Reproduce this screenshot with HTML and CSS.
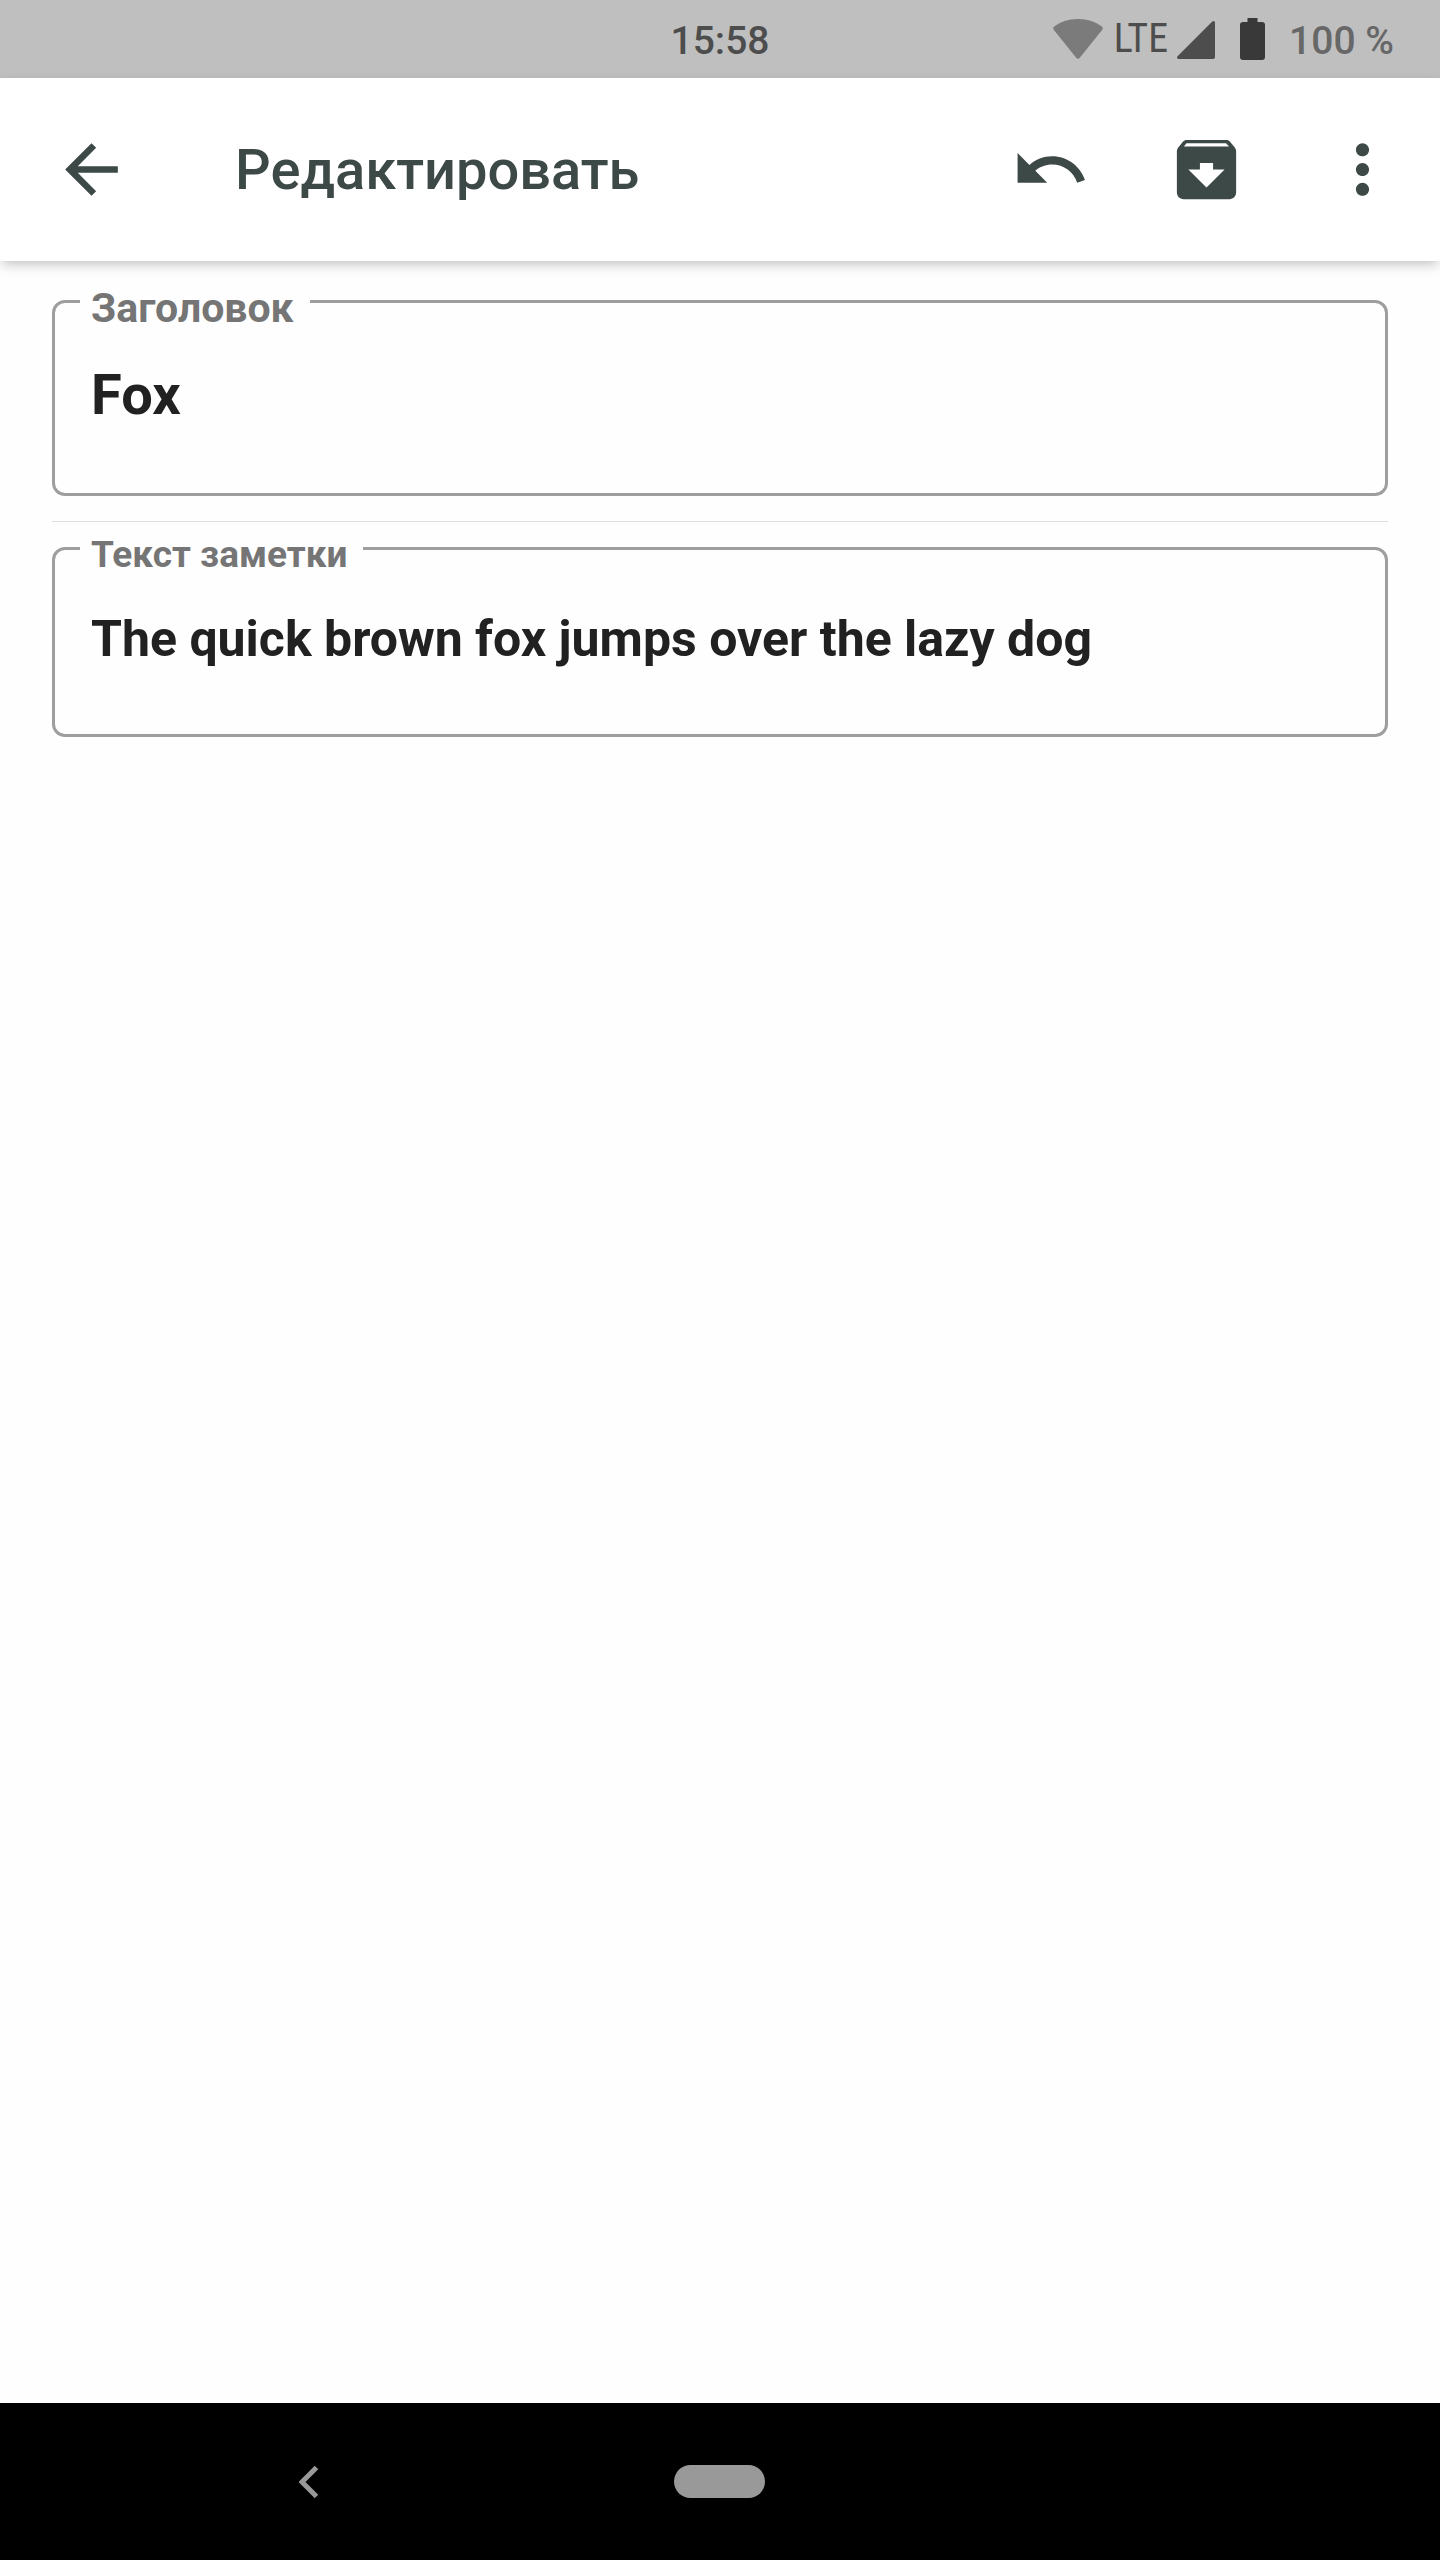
FILE: index.html
```html
<!DOCTYPE html>
<html lang="ru">
<head>
<meta charset="utf-8">
<meta name="viewport" content="width=device-width, initial-scale=1">
<title>Редактировать</title>
<link rel="stylesheet" href="styles.css">
</head>
<body>
<div class="status-bar">
  <span class="status-time">15:58</span>
  <div class="status-icons">
    <svg class="icon-wifi" viewBox="0 0 50 40" aria-hidden="true"><path d="M25 0C15 0 7 3 1.200 7.500Q-.5 9 .9 10.900L23.200 38.800Q25 40.600 26.800 38.800L49.100 10.900Q50.500 9 48.800 7.500C43 3 35 0 25 0z"/></svg>
    <span class="status-network">LTE</span>
    <svg class="icon-signal" viewBox="0 0 38 38" aria-hidden="true"><path d="M35 .8Q38-1.200 38 2V36Q38 38 36 38H2Q-1 38 .6 35.200z"/></svg>
    <svg class="icon-battery" viewBox="0 0 25 42" aria-hidden="true"><path d="M7.500 0H17.500V4H22Q25 4 25 7V39Q25 42 22 42H3Q0 42 0 39V7Q0 4 3 4H7.500z"/></svg>
    <span class="status-percent">100 %</span>
  </div>
</div>
<header class="toolbar">
  <button class="tool-button tool-back" type="button" aria-label="Назад">
    <svg class="tool-icon" viewBox="0 0 24 24" aria-hidden="true"><path d="M20 11H7.830l5.590-5.590L12 4l-8 8 8 8 1.410-1.410L7.830 13H20v-2z"/></svg>
  </button>
  <h1 class="toolbar-title">Редактировать</h1>
  <button class="tool-button" type="button" aria-label="Отменить">
    <svg class="tool-icon" viewBox="0 0 24 24" aria-hidden="true"><path d="M12.500 8c-2.650 0-5.050.99-6.900 2.600L2 7v9h9l-3.620-3.620c1.390-1.160 3.160-1.880 5.120-1.880 3.540 0 6.550 2.310 7.600 5.500l2.370-.78C21.080 11.030 17.150 8 12.500 8z"/></svg>
  </button>
  <button class="tool-button" type="button" aria-label="Архивировать">
    <svg class="tool-icon" viewBox="0 0 24 24" aria-hidden="true"><path d="M20.540 5.230l-1.390-1.680C18.880 3.210 18.470 3 18 3H6c-.47 0-.88.21-1.160.55L3.460 5.230C3.170 5.570 3 6.020 3 6.500V19c0 1.100.9 2 2 2h14c1.100 0 2-.9 2-2V6.500c0-.48-.17-.93-.46-1.270zM12 17.500L6.500 12H10v-2h4v2h3.500L12 17.500zM5.120 5l.81-1h12l.94 1H5.120z"/></svg>
  </button>
  <button class="tool-button" type="button" aria-label="Ещё">
    <svg class="tool-icon" viewBox="0 0 24 24" aria-hidden="true"><path d="M12 8c1.100 0 2-.9 2-2s-.9-2-2-2-2 .9-2 2 .9 2 2 2zm0 2c-1.100 0-2 .9-2 2s.9 2 2 2 2-.9 2-2-.9-2-2-2zm0 6c-1.100 0-2 .9-2 2s.9 2 2 2 2-.9 2-2-.9-2-2-2z"/></svg>
  </button>
</header>
<main class="editor">
  <div class="field">
    <label class="field-label field-label-title" for="note-title">Заголовок</label>
    <input class="field-input" id="note-title" type="text" value="Fox">
  </div>
  <hr class="divider">
  <div class="field">
    <label class="field-label field-label-text" for="note-text">Текст заметки</label>
    <textarea class="field-area" id="note-text" rows="1">The quick brown fox jumps over the lazy dog</textarea>
  </div>
</main>
<nav class="system-nav">
  <button class="nav-button" type="button" aria-label="Назад">
    <svg class="nav-back" viewBox="0 0 20 34" aria-hidden="true"><path d="M17.500 2.500L3 17l14.500 14.500"/></svg>
  </button>
  <button class="nav-button" type="button" aria-label="Главный экран"><span class="nav-pill"></span></button>
</nav>
</body>
</html>
```
FILE: styles.css
```css
* {
  box-sizing: border-box;
}

body {
  margin: 0;
  min-height: 100vh;
  display: flex;
  flex-direction: column;
  background: #fefefe;
  color: #212121;
  font-family: Roboto, "Liberation Sans", sans-serif;
}

button {
  display: flex;
  align-items: center;
  justify-content: center;
  padding: 0;
  border: 0;
  background: none;
}

.status-bar {
  display: grid;
  grid-template-columns: 1fr auto 1fr;
  align-items: center;
  height: 78px;
  padding: 0 46px;
  background: #bfbfbf;
  font-size: 39px;
  font-weight: 500;
  line-height: 48px;
}

.status-time,
.status-percent {
  padding-top: 3px;
}

.status-time {
  grid-column: 2;
  color: #4d4d4d;
}

.status-icons {
  display: flex;
  align-items: center;
  justify-content: flex-end;
}

.icon-wifi {
  width: 50px;
  height: 40px;
  margin-right: 11px;
  fill: #7b7b7b;
}

.status-network {
  margin-right: 9px;
  color: #4d4d4d;
  font-family: "Roboto Condensed", "Liberation Sans Narrow", Roboto, sans-serif;
  font-size: 40px;
  font-weight: 400;
}

.icon-signal {
  width: 38px;
  height: 38px;
  margin-top: 2px;
  margin-right: 25px;
  fill: #4d4d4d;
}

.icon-battery {
  width: 25px;
  height: 42px;
  margin-right: 24px;
  fill: #393939;
}

.status-percent {
  color: #676767;
}

.toolbar {
  display: flex;
  align-items: stretch;
  height: 183px;
  background: #fff;
  color: #3c4947;
  box-shadow: 0 5px 12px -2px rgba(0, 0, 0, 0.25);
}

.tool-button {
  flex: none;
  width: 156px;
  color: inherit;
}

.tool-back {
  width: 183px;
}

.tool-icon {
  width: 79px;
  height: 79px;
  fill: currentColor;
}

.toolbar-title {
  flex: 1;
  align-self: center;
  margin: 0;
  padding-left: 52px;
  font-size: 56px;
  font-weight: 500;
  line-height: 64px;
}

.editor {
  flex: 1;
  padding: 39px 52px;
}

.field {
  position: relative;
  border: 3px solid #9e9e9e;
  border-radius: 13px;
}

.field-label {
  position: absolute;
  top: -19px;
  left: 25px;
  padding: 0 16px 0 11px;
  background: #fefefe;
  color: #757575;
  font-weight: 700;
  line-height: 48px;
}

.field-label-title {
  font-size: 41px;
}

.field-label-text {
  font-size: 37px;
}

.field-input,
.field-area {
  display: block;
  width: 100%;
  margin: 0;
  border: 0;
  outline: 0;
  background: transparent;
  color: inherit;
  font-family: inherit;
  font-weight: 700;
  line-height: 64px;
  resize: none;
  overflow: hidden;
}

.field-input {
  padding: 60px 36px 66px;
  font-size: 56px;
}

.field-area {
  padding: 57px 36px 63px;
  font-size: 50px;
}

.divider {
  height: 1px;
  margin: 25px 0;
  border: 0;
  background: #dfdfdf;
}

.system-nav {
  display: grid;
  grid-template-columns: repeat(3, 1fr);
  height: 157px;
  padding: 0 103px;
  background: #000;
}

.nav-back {
  width: 20px;
  height: 34px;
  fill: none;
  stroke: #999;
  stroke-width: 5;
}

.nav-pill {
  width: 91px;
  height: 33px;
  border-radius: 17px;
  background: #999;
}
```
